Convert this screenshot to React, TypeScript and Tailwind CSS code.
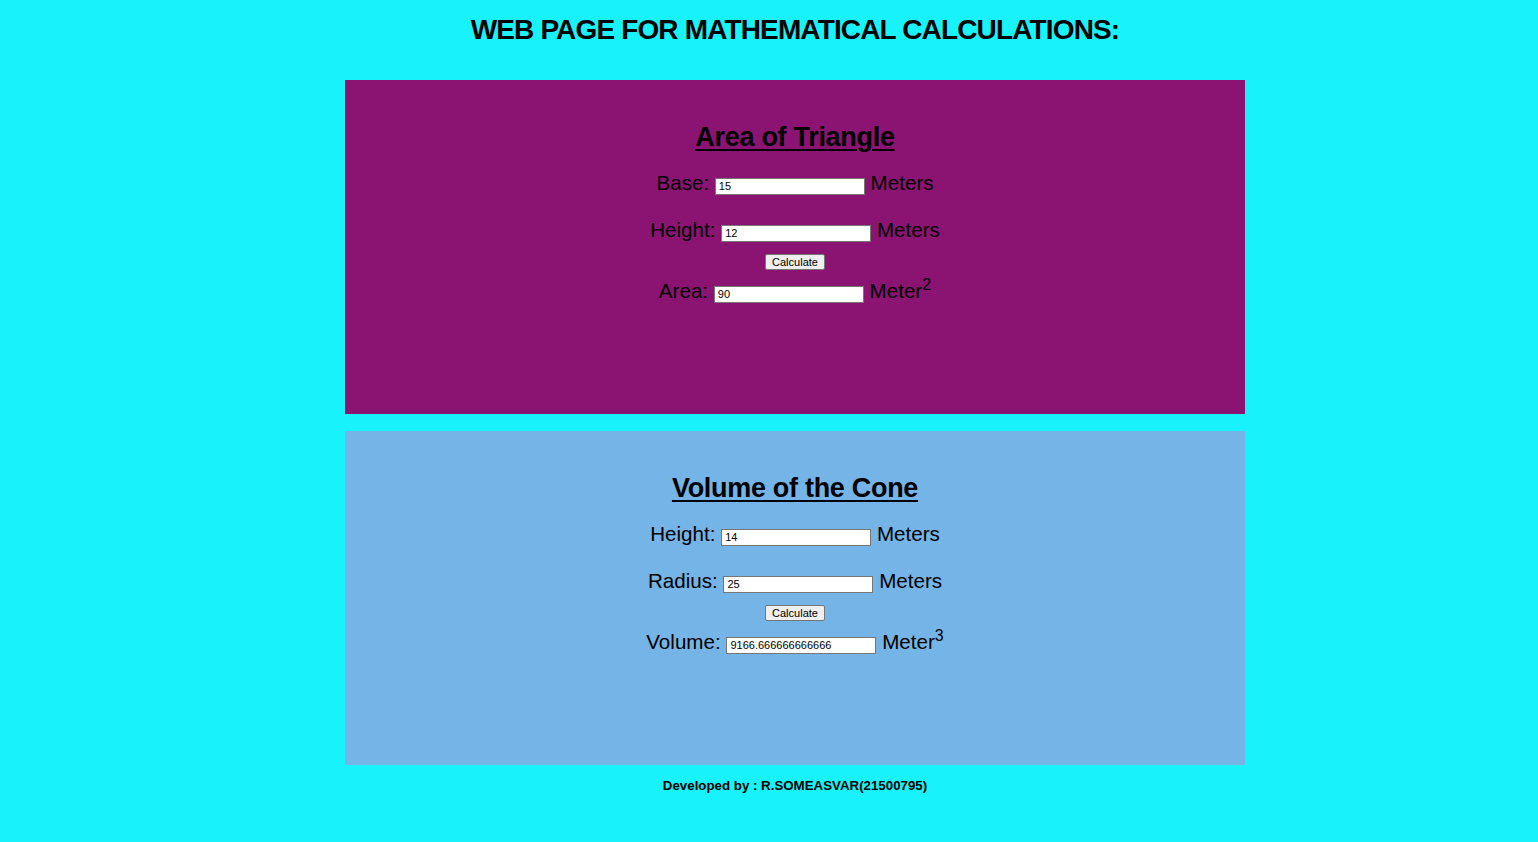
import { useState } from "react";

const font = { fontFamily: '"Liberation Sans", Arial, sans-serif' };

type Row = { label: string; value: string; unit: string; sup?: string };

const Field = ({ label, value, unit, sup }: Row) => (
  <div className="text-[20.6px] leading-[24px] text-black">
    {label}{" "}
    <input
      type="text"
      readOnly
      value={value}
      className="w-[150px] h-[17px] border border-[#767676] bg-white px-[3px] text-[11px] leading-[13px] text-black outline-none align-baseline"
      style={font}
    />{" "}
    {unit}
    {sup && <sup className="text-[16px] top-[-0.5em]">{sup}</sup>}
  </div>
);

const Panel = ({
  title,
  bg,
  first,
  second,
  result,
}: {
  title: string;
  bg: string;
  first: Row;
  second: Row;
  result: Row;
}) => (
  <div className={`w-[900px] h-[334px] ${bg} flex flex-col items-center pt-[41px]`}>
    <h2 className="text-[27px] leading-[32px] font-bold underline underline-offset-[3px] decoration-[2px] tracking-[-0.3px] text-black">
      {title}
    </h2>
    <div className="mt-[18px]">
      <Field {...first} />
    </div>
    <div className="mt-[23px]">
      <Field {...second} />
    </div>
    <button
      className="mt-[12px] h-[16px] px-[6px] border border-[#767676] bg-[#efefef] rounded-[2px] text-[11px] leading-[14px] text-black"
      style={font}
    >
      Calculate
    </button>
    <div className="mt-[9px]">
      <Field {...result} />
    </div>
  </div>
);

export default function App() {
  const [triangle] = useState({ base: "15", height: "12", area: "90" });
  const [cone] = useState({ height: "14", radius: "25", volume: "9166.666666666666" });

  return (
    <div className="min-h-[842px] w-full bg-[#18f3fb]" style={font}>
      <div className="pl-[345px]">
        <div className="w-[900px] flex flex-col items-center">
          <h1 className="pt-[14px] text-[28px] leading-[32px] font-bold tracking-[-0.85px] text-black">
            WEB PAGE FOR MATHEMATICAL CALCULATIONS:
          </h1>
          <div className="mt-[34px] flex flex-col gap-[17px]">
            <Panel
              title="Area of Triangle"
              bg="bg-[#8b1371]"
              first={{ label: "Base:", value: triangle.base, unit: "Meters" }}
              second={{ label: "Height:", value: triangle.height, unit: "Meters" }}
              result={{ label: "Area:", value: triangle.area, unit: "Meter", sup: "2" }}
            />
            <Panel
              title="Volume of the Cone"
              bg="bg-[#74b4e6]"
              first={{ label: "Height:", value: cone.height, unit: "Meters" }}
              second={{ label: "Radius:", value: cone.radius, unit: "Meters" }}
              result={{ label: "Volume:", value: cone.volume, unit: "Meter", sup: "3" }}
            />
          </div>
          <p className="mt-[13px] text-[13.3px] leading-[16px] font-bold text-black">
            Developed by : R.SOMEASVAR(21500795)
          </p>
        </div>
      </div>
    </div>
  );
}
